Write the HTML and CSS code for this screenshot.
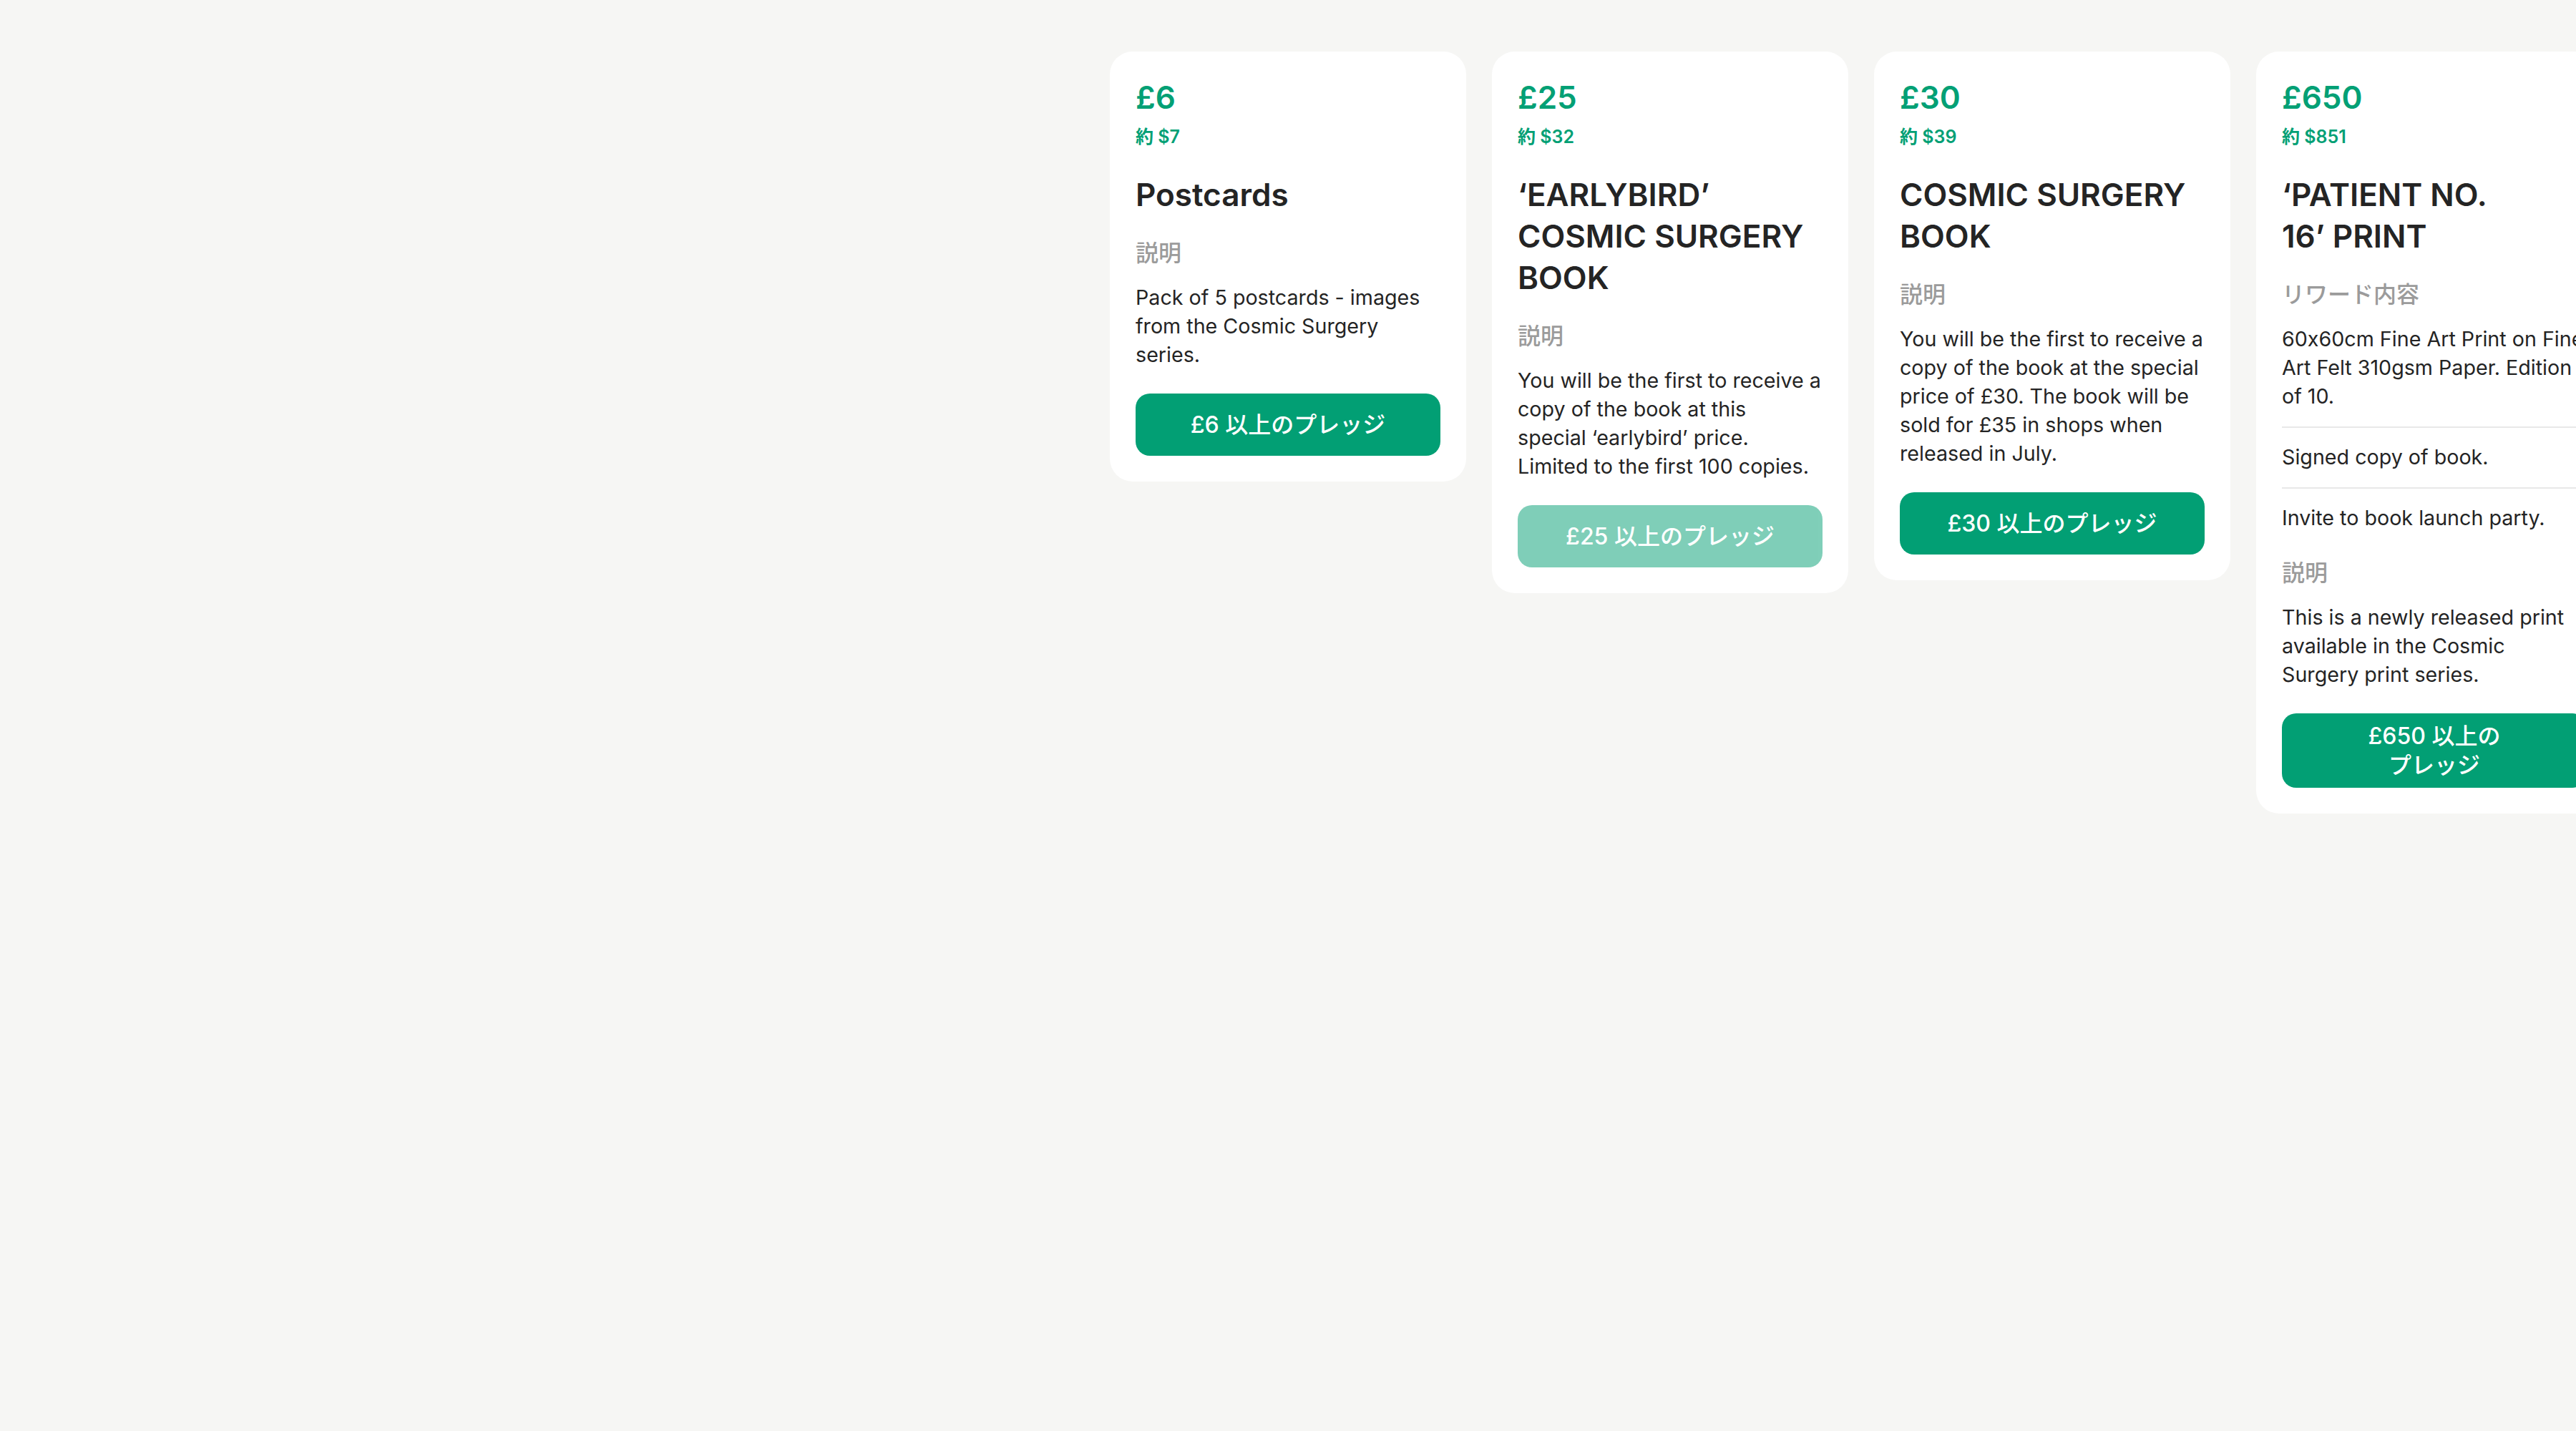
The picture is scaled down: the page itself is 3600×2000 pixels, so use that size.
FILE: index.html
```html
<!DOCTYPE html>
<html lang="ja">
<head>
<meta charset="utf-8">
<title>リワード</title>
<link rel="stylesheet" href="styles.css">
</head>
<body>
<main class="rewards">
  <article class="card">
    <div class="price">£6</div>
    <div class="approx">約 $7</div>
    <h2 class="title">Postcards</h2>
    <h3 class="label">説明</h3>
    <p class="text">Pack of 5 postcards - images from the Cosmic Surgery series.</p>
    <button class="pledge">£6 以上の<span class="keep">プレッジ</span></button>
  </article>

  <article class="card">
    <div class="price">£25</div>
    <div class="approx">約 $32</div>
    <h2 class="title">‘EARLYBIRD’ COSMIC SURGERY BOOK</h2>
    <h3 class="label">説明</h3>
    <p class="text">You will be the first to receive a copy of the book at this<br>special ‘earlybird’ price. Limited to the first 100 copies.</p>
    <button class="pledge is-disabled" disabled>£25 以上の<span class="keep">プレッジ</span></button>
  </article>

  <article class="card">
    <div class="price">£30</div>
    <div class="approx">約 $39</div>
    <h2 class="title">COSMIC SURGERY BOOK</h2>
    <h3 class="label">説明</h3>
    <p class="text">You will be the first to receive a copy of the book at the special price of £30. The book will be sold for £35 in shops when released in July.</p>
    <button class="pledge">£30 以上の<span class="keep">プレッジ</span></button>
  </article>

  <article class="card">
    <div class="price">£650</div>
    <div class="approx">約 $851</div>
    <h2 class="title">‘PATIENT NO. 16’&nbsp;PRINT</h2>
    <h3 class="label">リワード内容</h3>
    <ul class="items">
      <li class="item">60x60cm Fine Art Print on Fine Art Felt 310gsm Paper. Edition of 10.</li>
      <li class="item">Signed copy of book.</li>
      <li class="item">Invite to book launch party.</li>
    </ul>
    <h3 class="label">説明</h3>
    <p class="text">This is a newly released print available in the Cosmic Surgery print series.</p>
    <button class="pledge">£650 以上の<span class="keep">プレッジ</span></button>
  </article>
</main>
</body>
</html>
```
FILE: styles.css
```css
html, body {
  margin: 0;
  padding: 0;
  background: #f6f6f4;
}

body {
  font-family: Inter, "Noto Sans CJK JP", sans-serif;
  font-feature-settings: "calt" 0;
  color: #242424;
  overflow: hidden;
}

.rewards {
  display: flex;
  align-items: flex-start;
  gap: 36px;
  padding: 72px 0 0 calc(50% - 249px);
  overflow: hidden;
}

.card {
  flex: 0 0 498px;
  box-sizing: border-box;
  width: 498px;
  padding: 36px;
  background: #ffffff;
  border-radius: 32px;
  display: flex;
  flex-direction: column;
}

.price {
  font-size: 44px;
  line-height: 56px;
  font-weight: 600;
  color: #03a075;
}

.approx {
  margin-top: 11px;
  font-size: 25px;
  line-height: 32px;
  font-weight: 600;
  color: #03a075;
}

.title {
  margin: 36px 0 0;
  font-size: 44px;
  line-height: 58px;
  font-weight: 600;
  color: #242424;
}

.label {
  margin: 33px 0 0;
  font-size: 32px;
  line-height: 40px;
  font-weight: 500;
  color: #9b9b9b;
}

.text {
  margin: 22px 0 0;
  font-size: 28.66px;
  line-height: 40px;
  font-weight: 400;
}

.items {
  list-style: none;
  margin: 22px 0 2px;
  padding: 0;
}

.item {
  font-size: 28.66px;
  line-height: 40px;
  padding: 21px 0 22px;
  border-bottom: 2px solid #e8e8e8;
}

.item:first-child {
  padding-top: 0;
}

.item:last-child {
  border-bottom: 0;
  padding-bottom: 0;
}

.items + .label {
  margin-top: 35px;
}

.pledge {
  margin-top: 34px;
  min-height: 87px;
  padding: 11px 60px;
  border: 0;
  border-radius: 20px;
  background: #029f74;
  color: #ffffff;
  font-family: Inter, "Noto Sans CJK JP", sans-serif;
  font-feature-settings: "calt" 0;
  font-size: 32px;
  line-height: 41px;
  font-weight: 500;
  text-align: center;
}

.keep {
  white-space: nowrap;
}

.pledge.is-disabled {
  opacity: 0.5;
}
```
